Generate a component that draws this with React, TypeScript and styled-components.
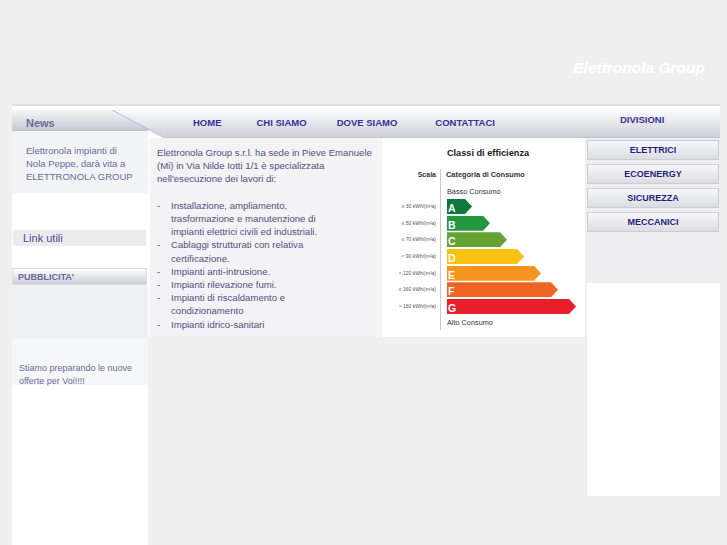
import React from "react";
import styled, { createGlobalStyle } from "styled-components";

const GlobalStyle = createGlobalStyle`
  html, body { margin: 0; padding: 0; background: #efefef; }
  body { font-family: "Liberation Sans", Arial, Helvetica, sans-serif; overflow: hidden; }
`;

const Header = styled.header`
  height: 104px;
  box-sizing: border-box;
  padding: 59px 22px 0 0;
  display: flex;
  justify-content: flex-end;
  align-items: flex-start;
`;

const Brand = styled.div`
  color: #fff;
  font-size: 15.5px;
  line-height: 18px;
  font-weight: bold;
  font-style: italic;
`;

const Shell = styled.div`
  margin-left: 12px;
  width: 708px;
  border-top: 2px solid #dde1e6;
  display: flex;
  align-items: flex-start;
`;

/* ---------- left column ---------- */
const LeftCol = styled.aside`
  width: 136px;
  min-height: 470px;
  background: #fff;
  padding-top: 4px;
  display: flex;
  flex-direction: column;
`;

const NewsHead = styled.div`
  height: 21px;
  box-sizing: border-box;
  padding: 5px 0 0 14px;
  display: flex;
  align-items: center;
  background: linear-gradient(#f4f5f7, #c6cad3);
  border-bottom: 1px solid #b9c4d2;
  color: #6b6b9b;
  font-size: 11px;
  font-weight: bold;
`;

const NewsBody = styled.div`
  height: 62px;
  box-sizing: border-box;
  padding: 12.5px 0 0 14px;
  background: #f2f3f5;
  color: #6b6b9b;
  font-size: 9.5px;
  line-height: 13px;
`;

const Spacer = styled.div<{ $h: number }>`
  height: ${(p) => p.$h}px;
`;

const LinkBox = styled.a`
  margin: 0 2px 0 1px;
  height: 16px;
  padding-left: 10px;
  display: flex;
  align-items: center;
  background: #ebebee;
  color: #4b4b8b;
  font-size: 11px;
  text-decoration: none;
`;

const PubHead = styled.div`
  height: 17px;
  box-sizing: border-box;
  margin-right: 1px;
  padding-left: 5px;
  display: flex;
  align-items: center;
  border: 1px solid #d9dde4;
  background: linear-gradient(#ffffff, #c9cdd5);
  color: #6b6b9b;
  font-size: 9px;
  font-weight: bold;
`;

const PubBody = styled.div`
  height: 100px;
  box-sizing: border-box;
  padding: 77px 0 0 7px;
  background: linear-gradient(#eff0f2 0 53px, #f5f6f8 53px);
  color: #6b6b9b;
  font-size: 9px;
  line-height: 13px;
`;

/* ---------- main ---------- */
const Main = styled.main`
  flex: 1;
  display: flex;
  flex-direction: column;
`;

const MenuRow = styled.nav`
  background: #fff;
  padding: 4px 0 0 17px;
`;

const MenuBar = styled.div`
  position: relative;
  height: 28px;
  box-sizing: border-box;
  border-bottom: 1px solid #bcc6d3;
  background: linear-gradient(#fbfbfc, #cdd0d8);
  display: flex;
  align-items: flex-start;

  &::before {
    content: "";
    position: absolute;
    left: -53px;
    top: 0;
    width: 53px;
    height: 28px;
    background: linear-gradient(#fbfbfc, #cdd0d8);
    clip-path: polygon(0 0, 100% 0, 100% 100%);
  }
  &::after {
    content: "";
    position: absolute;
    left: -53px;
    top: 0;
    width: 53px;
    height: 28px;
    background: linear-gradient(
      to top right,
      transparent calc(50% - 1px),
      #b3bfce 50%,
      transparent calc(50% + 1px)
    );
  }
`;

const NavLink = styled.a<{ $ml: number; $top: number }>`
  margin-left: ${(p) => p.$ml}px;
  margin-top: ${(p) => p.$top}px;
  font-size: 9.5px;
  line-height: 11px;
  font-weight: bold;
  color: #333399;
  text-decoration: none;
  white-space: nowrap;
`;

const ContentRow = styled.div`
  display: grid;
  grid-template-columns: 234px 203px 135px;
  align-items: start;
`;

const TextCol = styled.section`
  height: 199px;
  box-sizing: border-box;
  border-left: 2px solid #fff;
  background: #f3f3f5;
  padding: 8px 0 0 7px;
  color: #50507e;
  font-size: 9.6px;
  line-height: 13.2px;
`;

const Para = styled.p`
  margin: 0;
`;

const List = styled.ul`
  list-style: none;
  margin: 13.2px 0 0;
  padding: 0;
`;

const Item = styled.li`
  display: flex;
`;

const Dash = styled.span`
  width: 14px;
  flex: none;
`;

/* ---------- chart ---------- */
const ChartBox = styled.figure`
  margin: 0;
  height: 199px;
  box-sizing: border-box;
  padding-top: 9px;
  background: #fff;
`;

const ChartTitle = styled.div`
  padding-left: 9px;
  text-align: center;
  font-size: 9.2px;
  line-height: 12px;
  font-weight: bold;
  color: #222;
`;

const ChartBody = styled.div`
  display: flex;
  margin-top: 10px;
`;

const ScaleCol = styled.div`
  width: 58px;
  box-sizing: border-box;
  padding-right: 4px;
  display: flex;
  flex-direction: column;
  align-items: flex-end;
`;

const ScaleHead = styled.div`
  height: 12px;
  margin-bottom: 18px;
  font-size: 7px;
  line-height: 12px;
  font-weight: bold;
  color: #333;
`;

const ScaleLabel = styled.div`
  height: 15px;
  margin-bottom: 1.67px;
  font-size: 5px;
  line-height: 15px;
  color: #555;
  white-space: nowrap;
`;

const BarsCol = styled.div`
  flex: 1;
  height: 161px;
  border-left: 1px solid #c9c9c9;
  padding-left: 6px;
  display: flex;
  flex-direction: column;
  align-items: flex-start;
`;

const CatHead = styled.div`
  height: 12px;
  margin: 0 0 5px -1px;
  font-size: 7.4px;
  line-height: 12px;
  font-weight: bold;
  color: #333;
`;

const Caption = styled.div<{ $mt: number; $mb: number }>`
  height: 12px;
  margin-top: ${(p) => p.$mt}px;
  margin-bottom: ${(p) => p.$mb}px;
  font-size: 7.3px;
  line-height: 12px;
  color: #333;
`;

const Bar = styled.div<{ $w: number; $c: string }>`
  width: ${(p) => p.$w}px;
  height: 15px;
  margin-bottom: 1.67px;
  box-sizing: border-box;
  padding-left: 1px;
  background: ${(p) => p.$c};
  clip-path: polygon(0 0, calc(100% - 7px) 0, 100% 50%, calc(100% - 7px) 100%, 0 100%);
  display: flex;
  align-items: flex-end;
  color: #fff;
  font-size: 10.5px;
  line-height: 11px;
  font-weight: bold;
`;

/* ---------- right column ---------- */
const RightCol = styled.aside`
  margin-left: 2px;
  height: 358px;
  box-sizing: border-box;
  padding-top: 2px;
  background: linear-gradient(#efeff1 0 145px, #fff 145px);
  display: flex;
  flex-direction: column;
  gap: 4px;
`;

const DivButton = styled.a`
  height: 20px;
  box-sizing: border-box;
  margin-right: 1px;
  border: 1px solid #cdced4;
  background: linear-gradient(#f7f7f9, #dcdde2);
  display: flex;
  align-items: center;
  justify-content: center;
  color: #1f1f80;
  font-size: 9px;
  font-weight: bold;
  text-decoration: none;
`;

const menu = [
  { label: "HOME", ml: 28, top: 7 },
  { label: "CHI SIAMO", ml: 35, top: 7 },
  { label: "DOVE SIAMO", ml: 30, top: 7 },
  { label: "CONTATTACI", ml: 38, top: 7 },
  { label: "DIVISIONI", ml: 125, top: 4 },
];

const classes = [
  { l: "A", w: 25, c: "#0b7a3a", s: "≤ 30 kWh/(m²a)" },
  { l: "B", w: 43, c: "#23963f", s: "≤ 50 kWh/(m²a)" },
  { l: "C", w: 60, c: "#64a232", s: "≤ 70 kWh/(m²a)" },
  { l: "D", w: 77, c: "#f9c112", s: "< 90 kWh/(m²a)" },
  { l: "E", w: 94, c: "#f5941e", s: "< 120 kWh/(m²a)" },
  { l: "F", w: 111, c: "#ef6422", s: "≤ 160 kWh/(m²a)" },
  { l: "G", w: 129, c: "#e81f2b", s: "> 160 kWh/(m²a)" },
];

const divisions = ["ELETTRICI", "ECOENERGY", "SICUREZZA", "MECCANICI"];

function EnergyChart() {
  return (
    <ChartBox>
      <ChartTitle>Classi di efficienza</ChartTitle>
      <ChartBody>
        <ScaleCol>
          <ScaleHead>Scala</ScaleHead>
          {classes.map((k) => (
            <ScaleLabel key={k.l}>{k.s}</ScaleLabel>
          ))}
        </ScaleCol>
        <BarsCol>
          <CatHead>Categoria di Consumo</CatHead>
          <Caption $mt={0} $mb={1}>Basso Consumo</Caption>
          {classes.map((k) => (
            <Bar key={k.l} $w={k.w} $c={k.c}>
              {k.l}
            </Bar>
          ))}
          <Caption $mt={1} $mb={0}>Alto Consumo</Caption>
        </BarsCol>
      </ChartBody>
    </ChartBox>
  );
}

export default function App() {
  return (
    <>
      <GlobalStyle />
      <Header>
        <Brand>Elettronola Group</Brand>
      </Header>
      <Shell>
        <LeftCol>
          <NewsHead>News</NewsHead>
          <NewsBody>
            Elettronola impianti di
            <br />
            Nola Peppe, darà vita a
            <br />
            ELETTRONOLA GROUP
          </NewsBody>
          <Spacer $h={37} />
          <LinkBox href="#">Link utili</LinkBox>
          <Spacer $h={22} />
          <PubHead>PUBBLICITA'</PubHead>
          <PubBody>
            Stiamo preparando le nuove
            <br />
            offerte per Voi!!!!
          </PubBody>
        </LeftCol>
        <Main>
          <MenuRow>
            <MenuBar>
              {menu.map((m) => (
                <NavLink key={m.label} href="#" $ml={m.ml} $top={m.top}>
                  {m.label}
                </NavLink>
              ))}
            </MenuBar>
          </MenuRow>
          <ContentRow>
            <TextCol>
              <Para>
                Elettronola Group s.r.l. ha sede in Pieve Emanuele
                <br />
                (Mi) in Via Nilde Iotti 1/1 è specializzata
                <br />
                nell'esecuzione dei lavori di:
              </Para>
              <List>
                <Item>
                  <Dash>-</Dash>
                  <span>
                    Installazione, ampliamento,
                    <br />
                    trasformazione e manutenzione di
                    <br />
                    impianti elettrici civili ed industriali.
                  </span>
                </Item>
                <Item>
                  <Dash>-</Dash>
                  <span>
                    Cablaggi strutturati con relativa
                    <br />
                    certificazione.
                  </span>
                </Item>
                <Item>
                  <Dash>-</Dash>
                  <span>Impianti anti-intrusione.</span>
                </Item>
                <Item>
                  <Dash>-</Dash>
                  <span>Impianti rilevazione fumi.</span>
                </Item>
                <Item>
                  <Dash>-</Dash>
                  <span>
                    Impianti di riscaldamento e
                    <br />
                    condizionamento
                  </span>
                </Item>
                <Item>
                  <Dash>-</Dash>
                  <span>Impianti idrico-sanitari</span>
                </Item>
              </List>
            </TextCol>
            <EnergyChart />
            <RightCol>
              {divisions.map((d) => (
                <DivButton key={d} href="#">
                  {d}
                </DivButton>
              ))}
            </RightCol>
          </ContentRow>
        </Main>
      </Shell>
    </>
  );
}
